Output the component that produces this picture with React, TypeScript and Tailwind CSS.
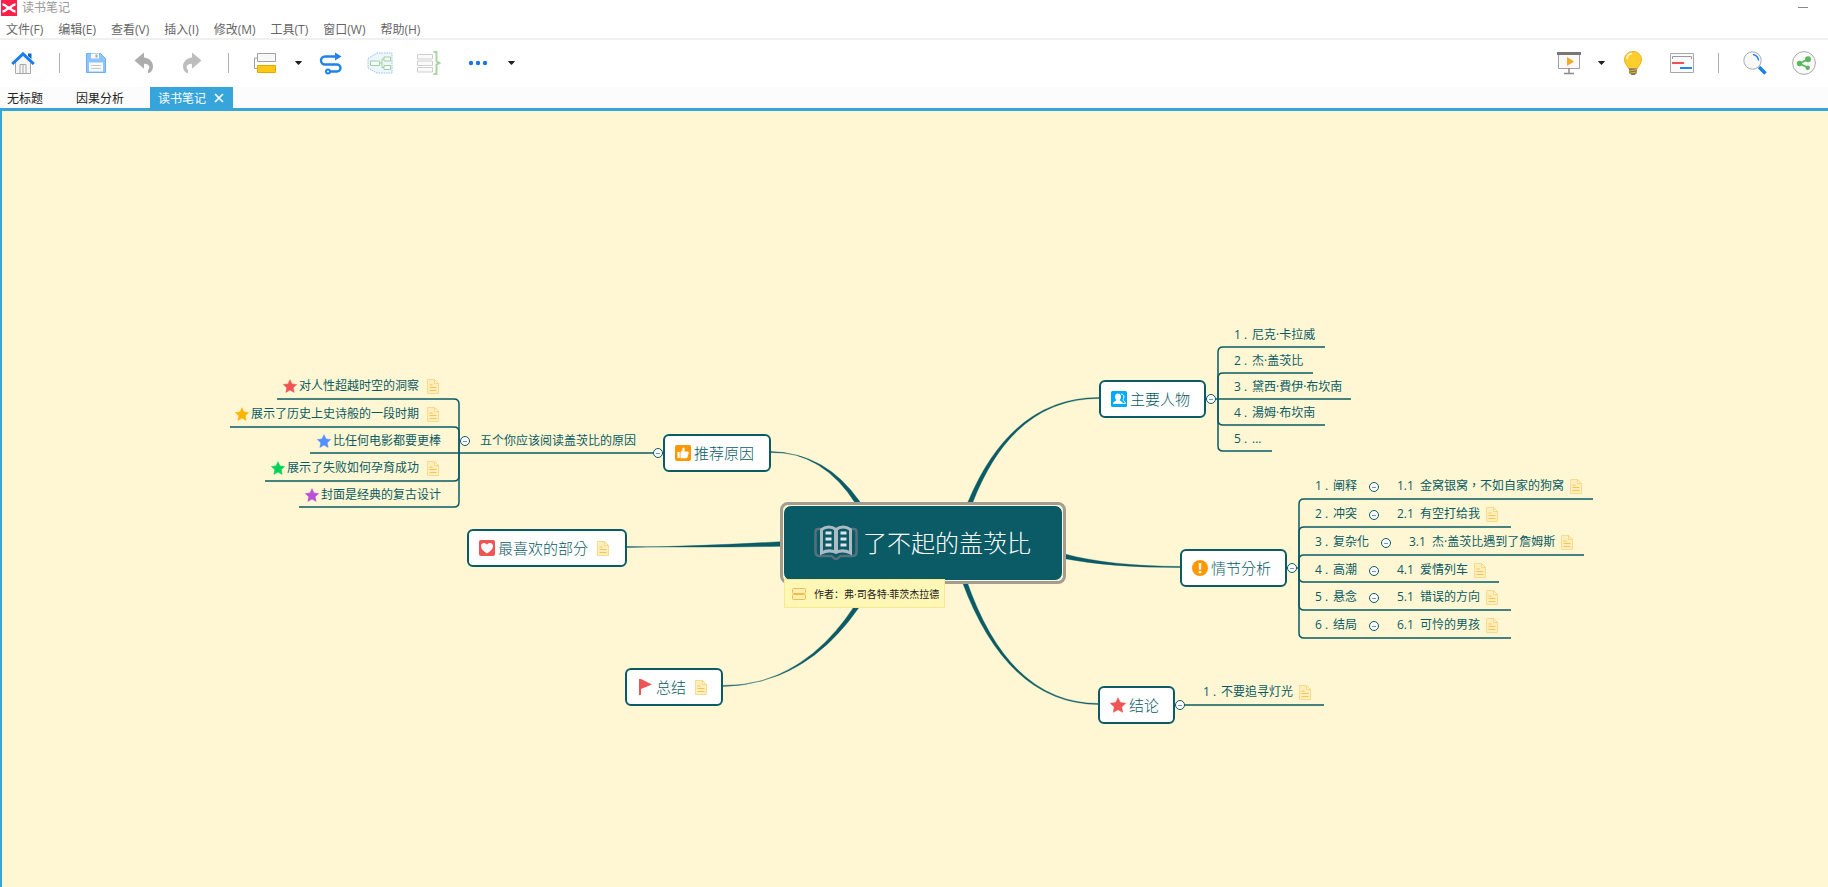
import type { CSSProperties, ReactNode } from "react";

const INK = "#0a5b65";

// area of the scene the map takes up
const VIEW = { x: 229, y: 321, w: 1372, h: 420 };
const at = (x: number, y: number): CSSProperties => ({ left: x - VIEW.x, top: y - VIEW.y });

const menus = ["文件(F)", "编辑(E)", "查看(V)", "插入(I)", "修改(M)", "工具(T)", "窗口(W)", "帮助(H)"];

const branches = [
    { x0: 858, y0: 502, cx: 824, cy: 451, x1: 771, y1: 451 },
    { x0: 970, y0: 502, cx: 1012, cy: 397, x1: 1099, y1: 397 },
    { x0: 781, y0: 543, cx: 700, cy: 546, x1: 626, y1: 546 },
    { x0: 1063, y0: 555, cx: 1110, cy: 566, x1: 1181, y1: 566 },
    { x0: 858, y0: 604, cx: 804, cy: 685, x1: 722, y1: 685 },
    { x0: 964, y0: 579, cx: 1008, cy: 703, x1: 1099, y1: 703 },
];

const reasons = [
    { color: "#f05454", label: "对人性超越时空的洞察", note: true, y: 385, line: 398, from: 277 },
    { color: "#ffb400", label: "展示了历史上史诗般的一段时期", note: true, y: 413, line: 426, from: 230 },
    { color: "#5090ff", label: "比任何电影都要更棒", note: false, y: 440, line: 452, from: 310 },
    { color: "#00d25a", label: "展示了失败如何孕育成功", note: true, y: 467, line: 480, from: 265 },
    { color: "#b850d8", label: "封面是经典的复古设计", note: false, y: 494, line: 506, from: 299 },
];

const people = [
    { num: "1 .", label: "尼克·卡拉威", y: 334, line: 346, to: 1325 },
    { num: "2 .", label: "杰·盖茨比", y: 360, line: 372, to: 1313 },
    { num: "3 .", label: "黛西·費伊·布坎南", y: 386, line: 398, to: 1351 },
    { num: "4 .", label: "湯姆·布坎南", y: 412, line: 424, to: 1325 },
    { num: "5 .", label: "...", y: 438, line: 450, to: 1272 },
];

const plots = [
    { num: "1 .", label: "阐释", subNum: "1.1", sub: "金窝银窝，不如自家的狗窝", y: 485, line: 498, to: 1593 },
    { num: "2 .", label: "冲突", subNum: "2.1", sub: "有空打给我", y: 513, line: 526, to: 1511 },
    { num: "3 .", label: "复杂化", subNum: "3.1", sub: "杰·盖茨比遇到了詹姆斯", y: 541, line: 554, to: 1584 },
    { num: "4 .", label: "高潮", subNum: "4.1", sub: "爱情列车", y: 569, line: 581, to: 1499 },
    { num: "5 .", label: "悬念", subNum: "5.1", sub: "错误的方向", y: 596, line: 609, to: 1511 },
    { num: "6 .", label: "结局", subNum: "6.1", sub: "可怜的男孩", y: 624, line: 637, to: 1511 },
];

type Branch = (typeof branches)[number];

// thick at the central topic, thin at the main topic
function taper({ x0, y0, cx, cy, x1, y1 }: Branch) {
    const len = Math.hypot(cx - x0, cy - y0);
    const nx = (-(cy - y0) / len) * 2.3;
    const ny = ((cx - x0) / len) * 2.3;
    return `M${x0 + nx} ${y0 + ny}Q${cx + nx / 3} ${cy + ny / 3} ${x1} ${y1 + 0.5}V${y1 - 0.5}Q${cx - nx / 3} ${cy - ny / 3} ${x0 - nx} ${y0 - ny}Z`;
}

function bracket(spine: number, end: number, y: number, mid: number) {
    const dir = end > spine ? 1 : -1;
    const v = y > mid ? -1 : 1;
    if (y === mid) return `M${spine} ${y}H${end}`;
    return `M${spine} ${mid}V${y + 5 * v}Q${spine} ${y} ${spine + 5 * dir} ${y}H${end}`;
}

function Star({ color, className = "w-[14px] h-[14px]" }: { color: string; className?: string }) {
    return (
        <svg viewBox="0 0 16 16" className={`shrink-0 ${className}`} fill={color}>
            <path d="M8 .8l2.3 4.8 5.3.7-3.9 3.7 1 5.3L8 12.7l-4.7 2.6 1-5.3L.4 6.3l5.3-.7z" stroke={color} strokeWidth=".6" strokeLinejoin="round" />
        </svg>
    );
}

function Note() {
    return (
        <svg viewBox="0 0 12 15" className="w-3 h-[15px] shrink-0">
            <path d="M.5.5h7l4 4v10H.5z" fill="#fdeec0" stroke="#f8dc8c" />
            <path d="M7.5.5v4h4z" fill="#fff7d3" stroke="#f8d070" strokeWidth=".8" />
            <path d="M2.5 6h3M2.5 8.5h7M2.5 11.5h7" stroke="#f4c64f" strokeWidth="1.2" />
        </svg>
    );
}

function Collapse({ x, y }: { x: number; y: number }) {
    return (
        <button aria-label="折叠" style={at(x - 5, y - 5)} className="absolute w-[10px] h-[10px] rounded-full border border-[#0a5b65] bg-white flex items-center justify-center">
            <span className="w-1 h-px bg-[#8a8ac8]"></span>
        </button>
    );
}

function MainTopic({ x, y, size, label, note, children }: { x: number; y: number; size: string; label: string; note?: boolean; children: ReactNode }) {
    return (
        <div style={at(x, y - 1)} className={`absolute h-[38px] flex items-center gap-[3px] pl-[10px] rounded-md border-2 border-[#0a5b65] bg-white text-[15px] font-light whitespace-nowrap ${size}`}>
            {children}
            <span>{label}</span>
            {note && <span className="ml-[6px]"><Note /></span>}
        </div>
    );
}

function ToolButton({ label, children }: { label: string; children: ReactNode }) {
    return (
        <button aria-label={label} className="w-[34px] h-8 flex items-center justify-center">
            {children}
        </button>
    );
}

function Caret({ label }: { label: string }) {
    return (
        <button aria-label={label} className="w-[10px] h-8 flex items-center justify-center">
            <svg viewBox="0 0 8 5" className="w-[7px] h-1"><path d="M0 0h8v1L4 5 0 1z" fill="#222" /></svg>
        </button>
    );
}

const Separator = () => <span className="w-px h-5 mx-[19px] bg-[#b0b0b0]"></span>;

function Toolbar() {
    return (
        <div className="h-[47px] flex items-center justify-between pl-[6px] pr-[7px] pb-[2px]">
            <div className="flex items-center">
                <ToolButton label="主页">
                    <svg viewBox="0 0 24 24" className="w-6 h-6" fill="none">
                        <path d="M4.5 11v11.5h15V11L12 4z" fill="#f6f6f6" stroke="#a8a8a8" />
                        <path d="M9 22.5v-9h6v9M12 13.5v9" stroke="#a8a8a8" />
                        <path d="M17 2.5h3.5V8L17 5z" fill="#1263c4" />
                        <path d="M1.2 13L12 2.8 22.8 13" stroke="#1a7fee" strokeWidth="3" />
                    </svg>
                </ToolButton>
                <Separator />
                <div className="flex gap-[14px]">
                    <ToolButton label="保存">
                        <svg viewBox="0 0 20 20" className="w-5 h-5">
                            <path d="M.5.5h14l5 5v14H.5z" fill="#8cc4fb" stroke="#6caef2" />
                            <path d="M5 .5h8v5H5z" fill="#fafafa" />
                            <path d="M9.5 1.5h2v3h-2z" fill="#a8a8a8" />
                            <path d="M3 9.5h14v9H3z" fill="#fafafa" />
                            <path d="M5 12.5h10M5 15.5h10" stroke="#c8c8c8" />
                        </svg>
                    </ToolButton>
                    <ToolButton label="撤销">
                        <svg viewBox="0 0 20 22" className="w-5 h-[22px]" fill="#adadad">
                            <path d="M.5 8.5L10 .5v5c5 .5 9 4 9 9 0 3.5-2 6-5 6.8v-3.3c1-.8 1.300-2 1.300-3 0-2-1.800-3.300-5.300-3.300v5z" />
                        </svg>
                    </ToolButton>
                    <ToolButton label="重做">
                        <svg viewBox="0 0 20 22" className="w-5 h-[22px]" fill="#bdbdbd">
                            <path d="M19.5 8.5L10 .5v5c-5 .5-9 4-9 9 0 3.5 2 6 5 6.8v-3.3c-1-.8-1.300-2-1.300-3 0-2 1.800-3.300 5.300-3.300v5z" />
                        </svg>
                    </ToolButton>
                </div>
                <Separator />
                <ToolButton label="主题">
                    <svg viewBox="0 0 24 22" className="w-6 h-[22px]" fill="none">
                        <path d="M4 6H1.5v10.500H4" stroke="#a0a0a0" />
                        <path d="M4.5 1.5h18v8h-18z" fill="#f8f8f8" stroke="#a0a0a0" />
                        <path d="M4.5 13.500h18v7h-18z" fill="#ffc817" stroke="#e8a800" />
                    </svg>
                </ToolButton>
                <span className="w-[11px]"></span>
                <Caret label="主题选项" />
                <span className="w-[11px]"></span>
                <div className="flex gap-[15px]">
                    <ToolButton label="联系">
                        <svg viewBox="0 0 24 24" className="w-6 h-6" fill="none" stroke="#1f83ea" strokeWidth="2.4">
                            <path d="M16 5.500H6a4 4 0 000 8h12a3.500 3.500 0 010 7h-7" />
                            <path d="M16 1.500l6.500 4-6.500 4z" fill="#1f83ea" stroke="none" />
                            <circle cx="9" cy="20.5" r="2" strokeWidth="2" />
                        </svg>
                    </ToolButton>
                    <ToolButton label="外框">
                        <svg viewBox="0 0 26 22" className="w-[26px] h-[22px]" fill="none">
                            <path d="M1 6.500L10 1h15v20H10L1 16z" fill="#edf6fd" stroke="#8fc2ec" strokeDasharray="1.5 1" />
                            <path d="M3.500 9h9v4.500h-9zM17 5h6.500v4H17zM17 13.500h6.500v4H17z" stroke="#a5cfa0" fill="#f7fbf7" />
                            <path d="M12.500 11H15M17 7h-2v8.500h2" stroke="#a5cfa0" />
                        </svg>
                    </ToolButton>
                    <ToolButton label="概要">
                        <svg viewBox="0 0 24 24" className="w-6 h-6" fill="none">
                            <path d="M.5 3.500h15V8H.5zM.5 10h15v4.500H.5zM.5 16.500h15V21H.5z" stroke="#cfcfcf" fill="#fafafa" />
                            <path d="M16.500 1H19.500V10.500L22.500 12 19.500 13.500V23H16.500" stroke="#a9d4a4" strokeWidth="2" />
                        </svg>
                    </ToolButton>
                    <ToolButton label="更多">
                        <svg viewBox="0 0 20 6" className="w-5 h-[6px]" fill="#1a76e0">
                            <circle cx="3" cy="3" r="2.2" /><circle cx="10" cy="3" r="2.2" /><circle cx="17" cy="3" r="2.2" />
                        </svg>
                    </ToolButton>
                </div>
                <span className="w-[11px]"></span>
                <Caret label="更多选项" />
            </div>
            <div className="flex items-center">
                <ToolButton label="演示">
                    <svg viewBox="0 0 24 24" className="w-6 h-6" fill="none">
                        <path d="M1.500 3.500h21v14h-21z" fill="#fafafa" stroke="#a0a0a0" />
                        <path d="M0 1h24v3H0z" fill="#777" />
                        <path d="M12 17.500V22M7 22.500h10" stroke="#888" strokeWidth="1.5" />
                        <path d="M10 6l7 4.500-7 4.500z" fill="#f9a825" />
                    </svg>
                </ToolButton>
                <span className="w-[10px]"></span>
                <Caret label="演示选项" />
                <span className="w-[10px]"></span>
                <div className="flex gap-[15px]">
                    <ToolButton label="头脑风暴">
                        <svg viewBox="0 0 20 24" className="w-5 h-6">
                            <path d="M10 .5c5 0 8.500 3.700 8.500 8.300 0 4-3 5.700-4 8.700h-9c-1-3-4-4.700-4-8.700C1.500 4.200 5 .5 10 .5z" fill="#ffcd2e" stroke="#eab020" />
                            <path d="M4 8c0-3 2-5 5-5.500" stroke="#fff2b8" strokeWidth="2" fill="none" />
                            <path d="M6 17.500h8v4.500l-2.500 2h-3L6 22z" fill="#7a7468" />
                            <path d="M6 20l8-1.300M6 22.300l8-1.300" stroke="#f0b92a" />
                        </svg>
                    </ToolButton>
                    <ToolButton label="甘特图">
                        <svg viewBox="0 0 24 20" className="w-6 h-5" fill="none">
                            <path d="M.5.5h23v19H.5z" fill="#fafafa" stroke="#a8a8a8" />
                            <path d="M2.500 6V3.500h19V6" stroke="#999" />
                            <path d="M2 10h12" stroke="#ef5350" strokeWidth="2" />
                            <path d="M10 15h12" stroke="#1e88ee" strokeWidth="2" />
                        </svg>
                    </ToolButton>
                </div>
                <Separator />
                <div className="flex gap-[15px]">
                    <ToolButton label="搜索">
                        <svg viewBox="0 0 24 24" className="w-6 h-6" fill="none">
                            <path d="M16 16l6.500 6.500" stroke="#1a80ea" strokeWidth="3.5" />
                            <circle cx="9.5" cy="9.5" r="8.7" fill="#f8f8f8" stroke="#a8a8a8" />
                            <path d="M10 3.500a6 6 0 015.500 6" stroke="#1a80ea" strokeWidth="1.5" />
                        </svg>
                    </ToolButton>
                    <ToolButton label="分享">
                        <svg viewBox="0 0 24 24" className="w-6 h-6" fill="none">
                            <circle cx="12" cy="12" r="11.4" fill="#fafafa" stroke="#a8a8a8" />
                            <path d="M15.500 8.500L7.500 12.500l8 4" stroke="#5cb85c" strokeWidth="1.8" />
                            <circle cx="16" cy="8.3" r="3" fill="#5cb85c" /><circle cx="7.5" cy="12.5" r="2.7" fill="#5cb85c" /><circle cx="15.7" cy="16.8" r="2.2" fill="#5cb85c" />
                        </svg>
                    </ToolButton>
                </div>
            </div>
        </div>
    );
}

function Connectors() {
    return (
        <svg viewBox={`${VIEW.x} ${VIEW.y} ${VIEW.w} ${VIEW.h}`} className="absolute inset-0 w-full h-full" fill="none" stroke={INK} strokeWidth="1.5">
            {branches.map((b) => <path key={b.x1 + "-" + b.y1} d={taper(b)} fill={INK} strokeWidth=".4" />)}
            {reasons.map((r) => <path key={r.line} d={bracket(459, r.from, r.line, 452)} />)}
            <path d="M459 452H664" />
            {people.map((p) => <path key={p.line} d={bracket(1218, p.to, p.line, 398)} />)}
            <path d="M1206 398h12" />
            {plots.map((p) => <path key={p.line} d={bracket(1299, p.to, p.line, 567)} />)}
            <path d="M1287 567h12M1174 704h150" />
        </svg>
    );
}

function MindMap() {
    return (
        <div className="relative shrink-0 w-[1372px] h-[420px] text-xs leading-5 text-[#0a5b65] font-['Open_Sans','Noto_Sans_CJK_TC',sans-serif]">
            <Connectors />

            {reasons.map((r) => (
                <div key={r.label} style={at(230, r.y - 10)} className={`absolute w-[211px] h-5 flex items-center justify-end gap-[2px] whitespace-nowrap ${r.note ? "pr-[2px]" : ""}`}>
                    <Star color={r.color} />
                    <span>{r.label}</span>
                    {r.note && <span className="ml-[6px]"><Note /></span>}
                </div>
            ))}
            <Collapse x={465} y={440} />
            <span style={at(480, 430)} className="absolute whitespace-nowrap">五个你应该阅读盖茨比的原因</span>
            <Collapse x={658} y={452} />

            {people.map((p) => (
                <div key={p.num} style={at(1234, p.y - 10)} className="absolute flex whitespace-nowrap">
                    <span className="w-[18px]">{p.num}</span>
                    <span>{p.label}</span>
                </div>
            ))}
            <Collapse x={1211} y={398} />

            {plots.map((p) => (
                <div key={p.num}>
                    <div style={at(1315, p.y - 10)} className="absolute flex whitespace-nowrap">
                        <span className="w-[18px]">{p.num}</span>
                        <span>{p.label}</span>
                    </div>
                    <Collapse x={p.label.length > 2 ? 1386 : 1374} y={p.y + 1} />
                    <div style={at(p.label.length > 2 ? 1409 : 1397, p.y - 10)} className="absolute flex items-center whitespace-nowrap">
                        <span className="w-[23px]">{p.subNum}</span>
                        <span>{p.sub}</span>
                        <span className="ml-[6px]"><Note /></span>
                    </div>
                </div>
            ))}
            <Collapse x={1292} y={567} />

            <div style={at(1203, 681)} className="absolute flex items-center whitespace-nowrap">
                <span className="w-[18px]">1 .</span>
                <span>不要追寻灯光</span>
                <span className="ml-[6px]"><Note /></span>
            </div>
            <Collapse x={1180} y={704} />

            <MainTopic x={663} y={434} size="w-[108px]" label="推荐原因">
                <svg viewBox="0 0 16 16" className="w-4 h-4 shrink-0">
                    <rect width="16" height="16" rx="2" fill="#ff9800" />
                    <path d="M2.500 7h2.200v6H2.500zM5.500 7.200C7 6 7.500 5 7.700 3.200c.2-1 2-.8 2 .8 0 1-.2 1.700-.4 2.400h3.200c1.200 0 1.400 1 1.100 2l-1 3.600c-.2.800-.6 1.200-1.500 1.200H5.500z" fill="#fff" />
                </svg>
            </MainTopic>
            <MainTopic x={467} y={529} size="w-[160px]" label="最喜欢的部分" note>
                <svg viewBox="0 0 16 16" className="w-4 h-4 shrink-0">
                    <rect width="16" height="16" rx="2" fill="#ee5555" />
                    <path d="M8 13.500C4.500 11 2 8.800 2 6.200 2 4.200 3.500 3 5 3c1.300 0 2.400.7 3 1.800C8.600 3.700 9.700 3 11 3c1.500 0 3 1.200 3 3.200 0 2.600-2.500 4.800-6 7.300z" fill="#fff" />
                </svg>
            </MainTopic>
            <MainTopic x={625} y={668} size="w-[98px]" label="总结" note>
                <svg viewBox="0 0 16 16" className="w-4 h-4 shrink-0">
                    <path d="M2 0h2l11 5.500L4 10v6H2z" fill="#ee5555" />
                </svg>
            </MainTopic>
            <MainTopic x={1099} y={380} size="w-[107px]" label="主要人物">
                <svg viewBox="0 0 16 16" className="w-4 h-4 shrink-0">
                    <rect width="16" height="16" rx="1.5" fill="#00aaff" />
                    <path d="M10 3c2 0 3 1.300 3 3 0 1.200-.5 2-1 2.800 0 1.500 2.200 1.200 2.500 3.700H12" fill="none" stroke="#fff" />
                    <path d="M7 2.500c1.900 0 3 1.400 3 3.200 0 1.300-.5 2.300-1.200 3 0 1.800 3 1.300 3.200 4.300H2c.2-3 3.200-2.500 3.200-4.300C4.500 8 4 7 4 5.700 4 3.900 5.100 2.500 7 2.500z" fill="#fff" />
                </svg>
            </MainTopic>
            <MainTopic x={1180} y={549} size="w-[107px]" label="情节分析">
                <svg viewBox="0 0 16 16" className="w-4 h-4 shrink-0">
                    <circle cx="8" cy="8" r="8" fill="#ff9800" />
                    <path d="M6.800 3h2.400v6.500H6.800zM6.800 11h2.400v2.200H6.800z" fill="#fff" />
                </svg>
            </MainTopic>
            <MainTopic x={1098} y={686} size="w-[77px]" label="结论">
                <Star color="#ee5555" className="w-4 h-4" />
            </MainTopic>

            <div style={at(780, 501)} className="absolute w-[286px] h-[82px] rounded-lg border-[3px] border-[#a39c93] bg-[#fff7d3]">
                <div className="h-full flex items-center gap-[5px] pl-[30px] rounded-lg border border-[#fff7d3] bg-[#0a5b65] text-2xl font-light text-white whitespace-nowrap">
                    <svg viewBox="0 0 44 36" className="w-11 h-9 shrink-0" fill="none">
                        <path d="M6 4H4Q1.500 4 1.500 7v20q0 4 4 4H17c2 0 2.500 3 5 3s3-3 5-3h11.500q4 0 4-4V7q0-3-2.500-3h-2" stroke="#56707c" strokeWidth="2.5" />
                        <path d="M7.500 28V4.500Q15-.5 22 4.500 29-.5 36.500 4.500V28Q29 24 22 27.500 15 24 7.500 28z" stroke="#adbac4" strokeWidth="3" />
                        <path d="M22 4v24" stroke="#adbac4" strokeWidth="4" />
                        <path d="M11.500 8h6M11.500 14h6M11.500 20h6M26.500 8h6M26.500 14h6M26.500 20h6" stroke="#dfe5ea" strokeWidth="3" />
                    </svg>
                    <h1>了不起的盖茨比</h1>
                </div>
            </div>
            <div style={at(784, 578)} className="absolute w-[161px] h-[29px] flex items-center gap-2 pl-[7px] border border-[#f8e88f] bg-[#fff7b5] text-[10px] text-[#222] whitespace-nowrap font-['Open_Sans','Noto_Sans_CJK_SC',sans-serif]">
                <svg viewBox="0 0 14 12" className="w-[14px] h-3 shrink-0" fill="#ffeeb8" stroke="#f3bd45">
                    <rect x=".5" y=".5" width="13" height="5" rx="1" /><rect x=".5" y="6.5" width="13" height="5" rx="1" />
                </svg>
                <span lang="zh-CN">作者：弗·司各特·菲茨杰拉德</span>
            </div>
        </div>
    );
}

export default function App() {
    return (
        <div className="min-h-screen flex flex-col bg-white text-xs text-[#666] font-['Open_Sans','Noto_Sans_CJK_SC',sans-serif]">
            <header>
                <div className="h-[17px] flex items-start justify-between pl-px pr-5">
                    <div className="flex items-center gap-[5px] text-[#999]">
                        <svg viewBox="0 0 16 16" className="w-4 h-4" fill="none">
                            <rect width="16" height="16" fill="#ff1f4b" />
                            <path d="M1.500 4.500C5 4.500 6.500 8 8 8s3-3.500 6.500-3.500M1.500 11.500C5 11.500 6.500 8 8 8s3 3.500 6.500 3.500" stroke="#fff" strokeWidth="2.4" />
                            <path d="M6 8h4" stroke="#fff" strokeWidth="3" />
                        </svg>
                        <span className="leading-4">读书笔记</span>
                    </div>
                    <button aria-label="最小化" className="h-[15px] w-[10px] flex items-center"><span className="w-full h-px bg-[#888]"></span></button>
                </div>
                <nav className="h-[23px] flex items-center gap-[15px] pl-[6px] pt-1 border-b-2 border-[#f0f0f0]">
                    {menus.map((m) => <button key={m}>{m}</button>)}
                </nav>
            </header>
            <Toolbar />
            <div className="h-[21px] flex items-stretch bg-[#fcfcfc] text-[#222]">
                <button className="pl-[7px] pr-4 pt-[2px]">无标题</button>
                <button className="px-[17px] pt-[2px]">因果分析</button>
                <div className="ml-[9px] pl-2 pr-[9px] flex items-center gap-2 bg-[#36a5dc] text-white">
                    <button className="pt-[2px]">读书笔记</button>
                    <button aria-label="关闭">
                        <svg viewBox="0 0 10 10" className="w-[10px] h-[10px]" stroke="#fff" strokeWidth="1.6"><path d="M1 1l8 8M9 1L1 9" /></svg>
                    </button>
                </div>
            </div>
            <main className="grow flex justify-center pt-[211px] border-t-[3px] border-l-2 border-[#36a5dc] bg-[#fff7d3] overflow-hidden">
                <MindMap />
            </main>
        </div>
    );
}
